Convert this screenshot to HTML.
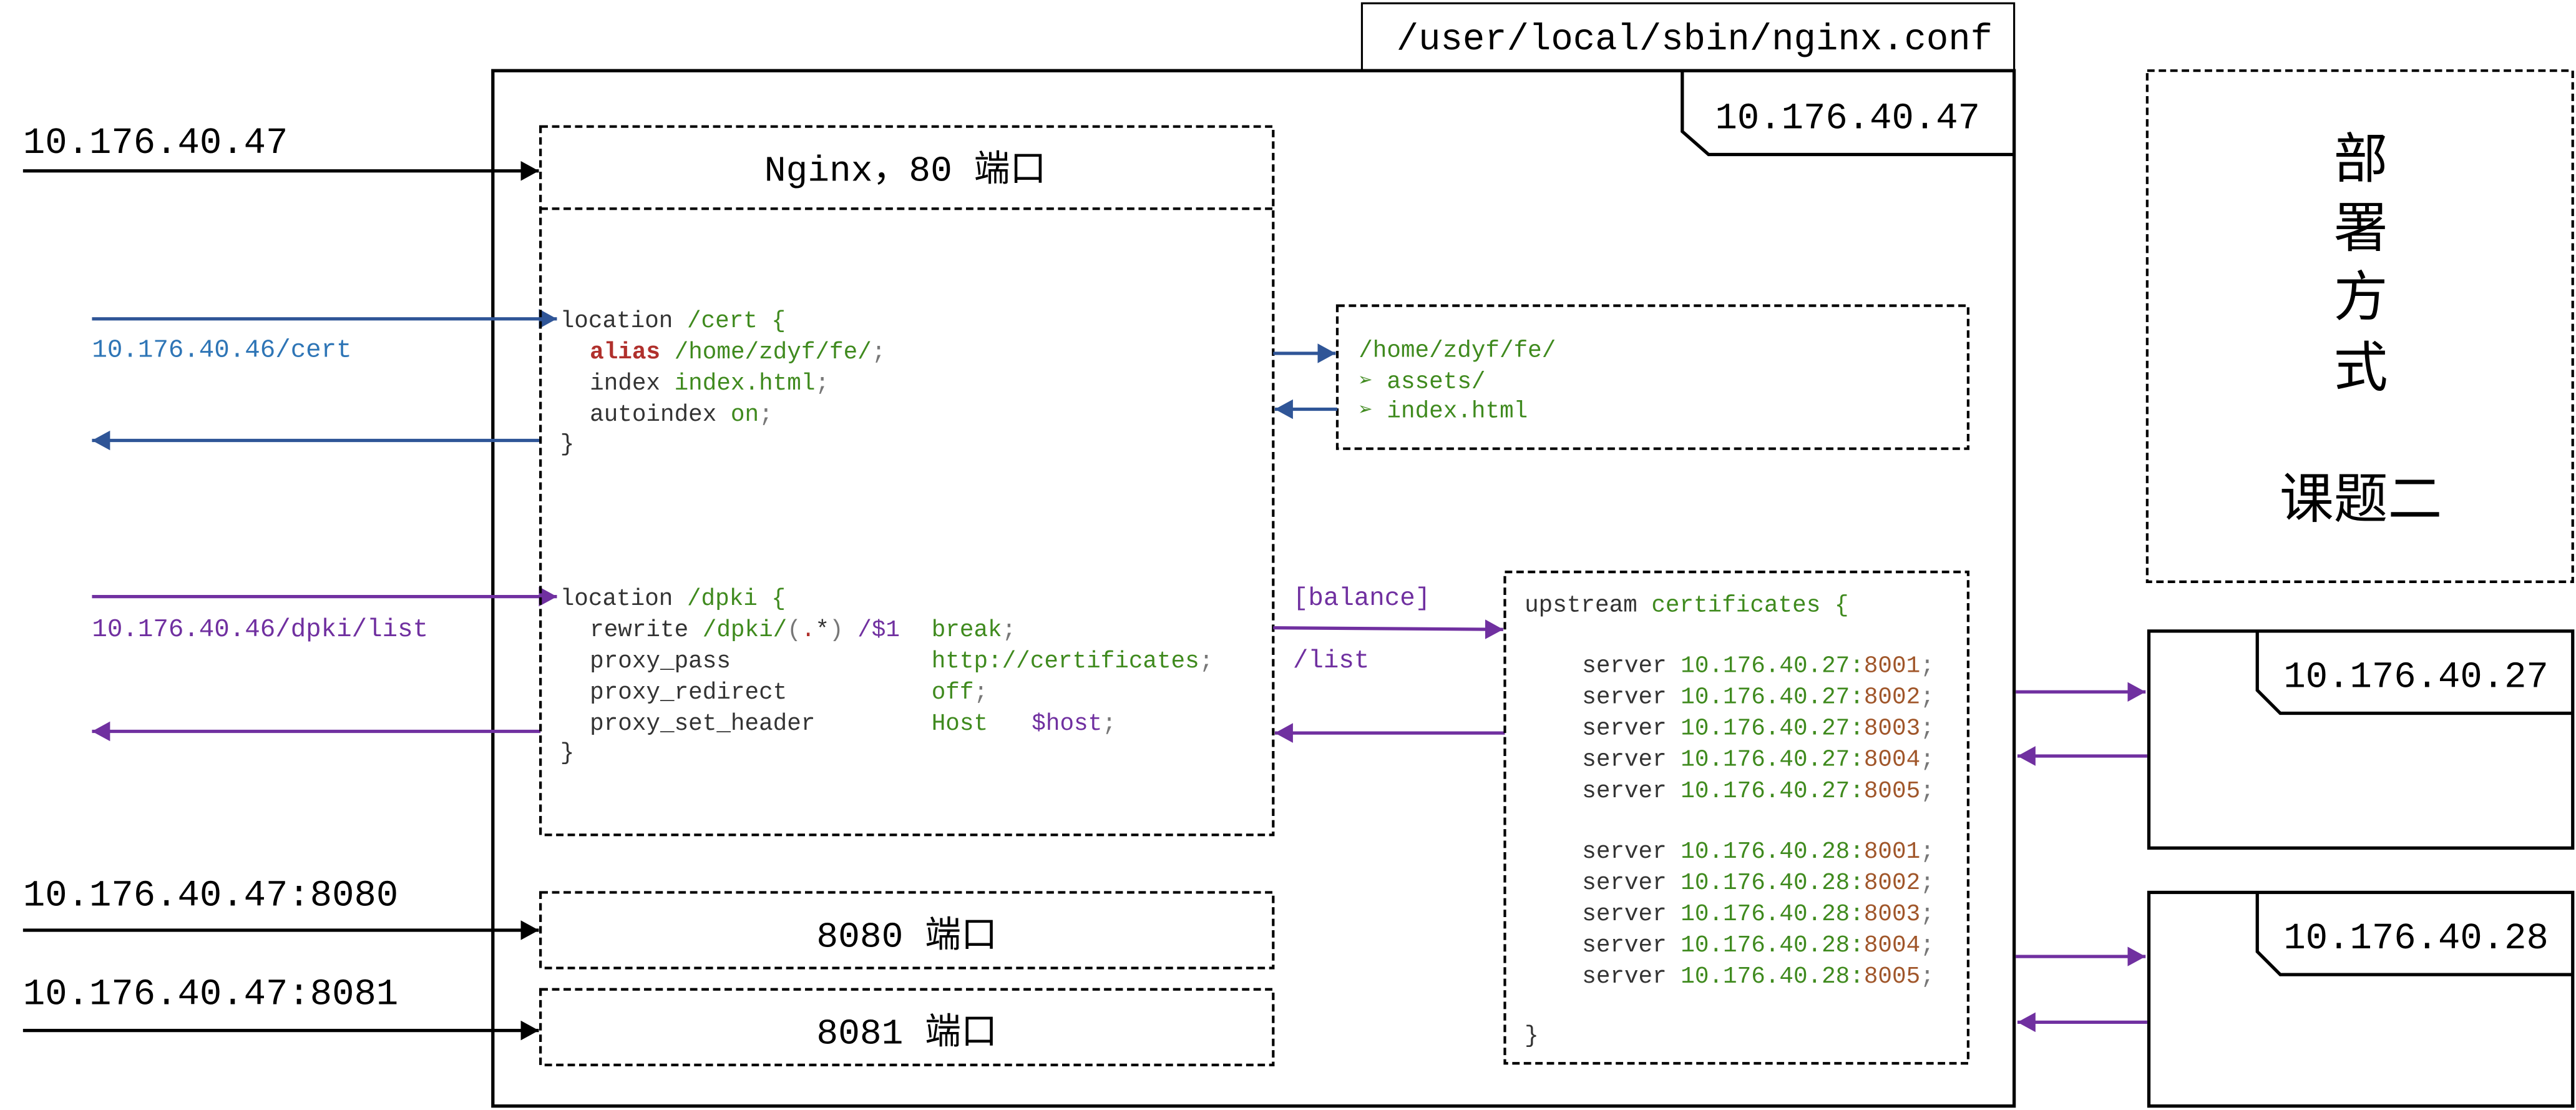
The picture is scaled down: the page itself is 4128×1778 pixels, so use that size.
<!DOCTYPE html>
<html><head><meta charset="utf-8"><style>
html,body{margin:0;padding:0;background:#fff;}
svg{display:block;}
text{font-family:"Liberation Mono","Noto Sans CJK SC",monospace;}
.c{font-size:14.3px;fill:#333;}
.g{fill:#3f8a1e;}
.p{fill:#7030a0;}
.r{fill:#b0302c;font-weight:bold;}
.o{fill:#a0562a;}
.s{fill:#777;}
.big{font-size:22.4px;fill:#000;}
.d{fill:none;stroke:#000;stroke-width:1.6;stroke-dasharray:4.5 2.5;}
</style></head><body>
<svg width="4128" height="1778" viewBox="0 0 1568 675.4" preserveAspectRatio="none" xmlns="http://www.w3.org/2000/svg">
<defs>
<marker id="ab" markerUnits="userSpaceOnUse" markerWidth="14" markerHeight="14" refX="11" refY="6" orient="auto"><path d="M0,0 L11,6 L0,12 z" fill="#000"/></marker>
<marker id="au" markerUnits="userSpaceOnUse" markerWidth="14" markerHeight="14" refX="11" refY="6" orient="auto"><path d="M0,0 L11,6 L0,12 z" fill="#2f5597"/></marker>
<marker id="ap" markerUnits="userSpaceOnUse" markerWidth="14" markerHeight="14" refX="11" refY="6" orient="auto"><path d="M0,0 L11,6 L0,12 z" fill="#7030a0"/></marker>
</defs>

<rect x="829" y="2" width="397" height="41" fill="#fff" stroke="#000" stroke-width="1.2"/>
<text x="850" y="30" class="big">/user/local/sbin/nginx.conf</text>

<rect x="300" y="43" width="926" height="630" fill="none" stroke="#000" stroke-width="2"/>
<path d="M1024,43 L1024,80 L1040,94 L1226,94" fill="none" stroke="#000" stroke-width="2"/>
<text x="1044" y="78" class="big">10.176.40.47</text>

<text x="14" y="93" class="big">10.176.40.47</text>
<line x1="14" y1="104" x2="328" y2="104" stroke="#000" stroke-width="2" marker-end="url(#ab)"/>

<text x="56" y="217" style="font-size:15.5px;fill:#2e75b6">10.176.40.46/cert</text>
<line x1="56" y1="194" x2="339" y2="194" stroke="#2f5597" stroke-width="2" marker-end="url(#au)"/>
<line x1="329" y1="268" x2="56" y2="268" stroke="#2f5597" stroke-width="2" marker-end="url(#au)"/>

<text x="56" y="387" style="font-size:15.5px;fill:#7030a0">10.176.40.46/dpki/list</text>
<line x1="56" y1="363" x2="339" y2="363" stroke="#7030a0" stroke-width="2" marker-end="url(#ap)"/>
<line x1="329" y1="445" x2="56" y2="445" stroke="#7030a0" stroke-width="2" marker-end="url(#ap)"/>

<text x="14" y="551" class="big">10.176.40.47:8080</text>
<line x1="14" y1="566" x2="328" y2="566" stroke="#000" stroke-width="2" marker-end="url(#ab)"/>
<text x="14" y="611" class="big">10.176.40.47:8081</text>
<line x1="14" y1="627" x2="328" y2="627" stroke="#000" stroke-width="2" marker-end="url(#ab)"/>

<rect x="329" y="77" width="446" height="431" class="d"/>
<line x1="329" y1="127" x2="775" y2="127" class="d"/>
<text x="551" y="110" class="big" text-anchor="middle" style="font-size:22px">Nginx，80 端口</text>

<text class="c" xml:space="preserve"><tspan x="341" y="199">location <tspan class="g">/cert {</tspan></tspan><tspan x="359" y="218"><tspan class="r">alias</tspan> <tspan class="g">/home/zdyf/fe/</tspan><tspan class="s">;</tspan></tspan><tspan x="359" y="237">index <tspan class="g">index.html</tspan><tspan class="s">;</tspan></tspan><tspan x="359" y="256">autoindex <tspan class="g">on</tspan><tspan class="s">;</tspan></tspan><tspan x="341" y="274">}</tspan></text>

<text class="c" xml:space="preserve"><tspan x="341" y="368">location <tspan class="g">/dpki {</tspan></tspan><tspan x="359" y="387">rewrite <tspan class="g">/dpki/</tspan><tspan class="s">(</tspan><tspan fill="#b0302c">.</tspan>*<tspan class="s">)</tspan> <tspan class="p">/$1</tspan></tspan><tspan x="567" y="387" class="g">break<tspan class="s">;</tspan></tspan><tspan x="359" y="406">proxy_pass</tspan><tspan x="567" y="406" class="g">http://certificates<tspan class="s">;</tspan></tspan><tspan x="359" y="425">proxy_redirect</tspan><tspan x="567" y="425" class="g">off<tspan class="s">;</tspan></tspan><tspan x="359" y="444">proxy_set_header</tspan><tspan x="567" y="444" class="g">Host</tspan><tspan x="628" y="444" class="p">$host<tspan class="s">;</tspan></tspan><tspan x="341" y="462">}</tspan></text>

<rect x="814" y="186" width="384" height="87" class="d"/>
<text class="c g" xml:space="preserve"><tspan x="827" y="217">/home/zdyf/fe/</tspan><tspan x="827" y="236">➢ assets/</tspan><tspan x="827" y="254">➢ index.html</tspan></text>
<line x1="775" y1="215" x2="813" y2="215" stroke="#2f5597" stroke-width="2" marker-end="url(#au)"/>
<line x1="814" y1="249" x2="776" y2="249" stroke="#2f5597" stroke-width="2" marker-end="url(#au)"/>

<text x="787" y="368" style="font-size:15.5px;fill:#7030a0">[balance]</text>
<text x="787" y="406" style="font-size:15.5px;fill:#7030a0">/list</text>
<line x1="775" y1="382" x2="915" y2="383" stroke="#7030a0" stroke-width="2" marker-end="url(#ap)"/>
<line x1="916" y1="446" x2="776" y2="446" stroke="#7030a0" stroke-width="2" marker-end="url(#ap)"/>

<rect x="916" y="348" width="282" height="299" class="d"/>
<text class="c" xml:space="preserve"><tspan x="928" y="372">upstream <tspan class="g">certificates {</tspan></tspan>
<tspan x="963" y="409">server <tspan class="g">10.176.40.27:</tspan><tspan class="o">8001</tspan><tspan class="s">;</tspan></tspan>
<tspan x="963" y="428">server <tspan class="g">10.176.40.27:</tspan><tspan class="o">8002</tspan><tspan class="s">;</tspan></tspan>
<tspan x="963" y="447">server <tspan class="g">10.176.40.27:</tspan><tspan class="o">8003</tspan><tspan class="s">;</tspan></tspan>
<tspan x="963" y="466">server <tspan class="g">10.176.40.27:</tspan><tspan class="o">8004</tspan><tspan class="s">;</tspan></tspan>
<tspan x="963" y="485">server <tspan class="g">10.176.40.27:</tspan><tspan class="o">8005</tspan><tspan class="s">;</tspan></tspan>
<tspan x="963" y="522">server <tspan class="g">10.176.40.28:</tspan><tspan class="o">8001</tspan><tspan class="s">;</tspan></tspan>
<tspan x="963" y="541">server <tspan class="g">10.176.40.28:</tspan><tspan class="o">8002</tspan><tspan class="s">;</tspan></tspan>
<tspan x="963" y="560">server <tspan class="g">10.176.40.28:</tspan><tspan class="o">8003</tspan><tspan class="s">;</tspan></tspan>
<tspan x="963" y="579">server <tspan class="g">10.176.40.28:</tspan><tspan class="o">8004</tspan><tspan class="s">;</tspan></tspan>
<tspan x="963" y="598">server <tspan class="g">10.176.40.28:</tspan><tspan class="o">8005</tspan><tspan class="s">;</tspan></tspan>
<tspan x="928" y="634">}</tspan></text>

<rect x="329" y="543" width="446" height="46" class="d"/>
<text x="552" y="576" class="big" text-anchor="middle" style="font-size:22px">8080 端口</text>
<rect x="329" y="602" width="446" height="46" class="d"/>
<text x="552" y="635" class="big" text-anchor="middle" style="font-size:22px">8081 端口</text>

<rect x="1307" y="43" width="259" height="311" class="d"/>
<text class="big" text-anchor="middle" style="font-size:33px;font-family:'Noto Sans CJK SC',sans-serif"><tspan x="1437" y="108">部</tspan><tspan x="1437" y="150">署</tspan><tspan x="1437" y="192">方</tspan><tspan x="1437" y="235">式</tspan><tspan x="1437" y="315">课题二</tspan></text>

<rect x="1308" y="384" width="258" height="132" fill="none" stroke="#000" stroke-width="2"/>
<path d="M1374,384 L1374,420 L1388,434 L1566,434" fill="none" stroke="#000" stroke-width="2"/>
<text x="1390" y="418" class="big">10.176.40.27</text>
<line x1="1227" y1="421" x2="1306" y2="421" stroke="#7030a0" stroke-width="2" marker-end="url(#ap)"/>
<line x1="1307" y1="460" x2="1228" y2="460" stroke="#7030a0" stroke-width="2" marker-end="url(#ap)"/>

<rect x="1308" y="543" width="258" height="130" fill="none" stroke="#000" stroke-width="2"/>
<path d="M1374,543 L1374,579 L1388,593 L1566,593" fill="none" stroke="#000" stroke-width="2"/>
<text x="1390" y="577" class="big">10.176.40.28</text>
<line x1="1227" y1="582" x2="1306" y2="582" stroke="#7030a0" stroke-width="2" marker-end="url(#ap)"/>
<line x1="1307" y1="622" x2="1228" y2="622" stroke="#7030a0" stroke-width="2" marker-end="url(#ap)"/>
</svg>
</body></html>
